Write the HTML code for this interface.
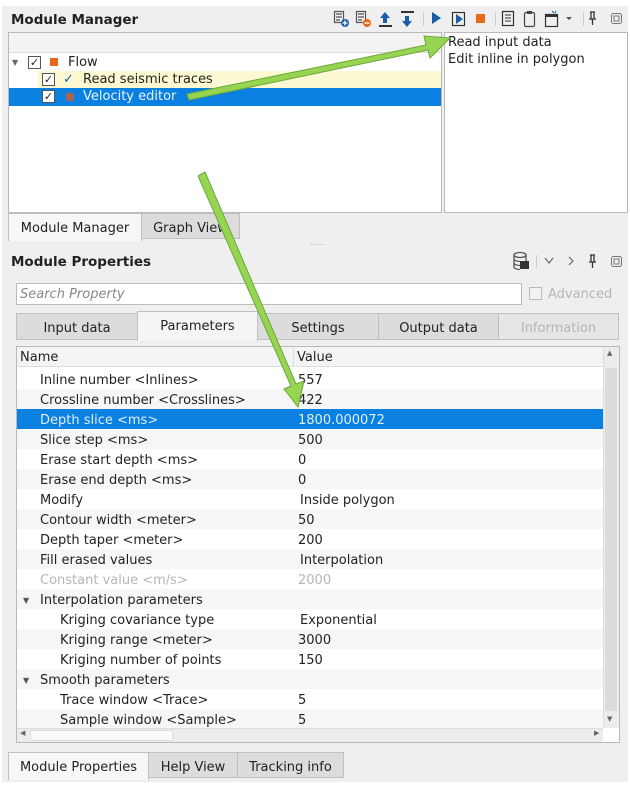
<!DOCTYPE html>
<html><head><meta charset="utf-8">
<style>
*{box-sizing:border-box;margin:0;padding:0}
body{width:630px;height:786px;background:#fff;font-family:"DejaVu Sans","Liberation Sans",sans-serif;font-size:13px;color:#222;position:relative;overflow:hidden}
.a{position:absolute}
.panel{left:2px;top:6px;width:626px;height:776px;background:#efefef}
.bold{font-weight:bold;font-size:13.5px}
.box{background:#fff;border:1px solid #b9b9b9}
.tab{position:absolute;border:1px solid #c0c0c0;background:#dcdcdc;text-align:center;line-height:29px;font-size:13px}
.tab.act{background:#f4f4f4;border-bottom:none}
.cb{position:absolute;width:13px;height:13px;border:1px solid #555;background:#fff;font-size:11px;line-height:11px;text-align:center;font-weight:bold}
.row{position:absolute;left:17px;width:586px;height:20px;line-height:23px}
.row .n{position:absolute;left:23px}
.row .v{position:absolute;left:281px}
.sel{background:#0a80e0;color:#dfeeff}
.alt{background:#f6f6f6}
.dis{color:#b5b5b5}
</style></head><body>
<div class="a panel"></div>
<div class="a bold" style="left:11px;top:12px">Module Manager</div>
<svg class="a" style="left:0;top:0" width="630" height="40">
<g fill="none" stroke="#555" stroke-width="1.2">
<rect x="334.5" y="11.5" width="9" height="11"/><path d="M336 14h6M336 17h6M336 20h4"/>
<rect x="356.5" y="11.5" width="9" height="11"/><path d="M358 14h6M358 17h6M358 20h4"/>
</g>
<circle cx="345" cy="23" r="4" fill="#1a5ea8"/><path d="M342.5 23h5M345 20.5v5" stroke="#fff" stroke-width="1.3"/>
<circle cx="367" cy="23" r="4" fill="#e8691a"/><path d="M364.5 23h5" stroke="#fff" stroke-width="1.3"/>
<path d="M385 12l-5 6h3v5h4v-5h3z" fill="#1a5ea8"/><rect x="379" y="25" width="13" height="2" fill="#333"/>
<rect x="401" y="11" width="13" height="2" fill="#333"/><path d="M407 27l-5-6h3v-5h4v5h3z" fill="#1a5ea8"/>
<rect x="423" y="12" width="1" height="14" fill="#ccc"/>
<path d="M432 12l9 6-9 6z" fill="#1a5ea8"/>
<rect x="452.5" y="12.5" width="12" height="13" fill="none" stroke="#333" stroke-width="1.2"/>
<path d="M456 14l7 5-7 5z" fill="#1a5ea8"/>
<rect x="476" y="14" width="9" height="9" fill="#e8691a"/>
<rect x="495" y="12" width="1" height="14" fill="#ccc"/>
<rect x="502.5" y="11.5" width="11" height="14" fill="none" stroke="#333" stroke-width="1.2"/><path d="M505 15h6M505 18h6M505 21h6" stroke="#333"/>
<rect x="524.5" y="12.5" width="10" height="14" rx="1.5" fill="none" stroke="#444" stroke-width="1.2"/><rect x="527" y="11" width="5" height="3" fill="#444"/>
<rect x="545.5" y="14.5" width="12" height="12" fill="none" stroke="#333" stroke-width="1.2"/><rect x="545" y="14" width="13" height="3" fill="#333"/>
<path d="M552 11l2 2M556 11l-1 2" stroke="#1a5ea8"/>
<path d="M566 17h6l-3 3z" fill="#555"/>
<rect x="583" y="12" width="1" height="14" fill="#ccc"/>
<path d="M590 12h5M591 12v7M594 12v7M589 19h7M592.5 19v6" stroke="#333" stroke-width="1.3" fill="none"/>
<rect x="611.5" y="13.5" width="10" height="10" rx="2" fill="none" stroke="#777"/><rect x="614" y="16" width="5" height="5" fill="none" stroke="#777"/>
</svg>

<div class="a box" style="left:8px;top:32px;width:434px;height:181px"></div>
<div class="a" style="left:9px;top:33px;width:432px;height:20px;background:#f3f3f3;border-bottom:1px solid #ddd"></div>
<div class="a" style="left:12px;top:58px;font-size:8px;color:#666">▼</div>
<div class="cb" style="left:28px;top:56px">✓</div>
<div class="a" style="left:50px;top:58px;width:8px;height:8px;background:#e8691a"></div>
<div class="a" style="left:68px;top:55px">Flow</div>
<div class="a" style="left:38px;top:71px;width:403px;height:17px;background:#fcf9d2"></div>
<div class="cb" style="left:42px;top:73px">✓</div>
<div class="a" style="left:63px;top:72px;color:#1a5ea8;font-weight:bold">✓</div>
<div class="a" style="left:83px;top:72px">Read seismic traces</div>
<div class="a" style="left:9px;top:88px;width:432px;height:18px;background:#0a80e0"></div>
<div class="cb" style="left:42px;top:90px">✓</div>
<div class="a" style="left:66px;top:93px;width:8px;height:8px;background:#a3655a"></div>
<div class="a" style="left:83px;top:89px;color:#e8f2ff">Velocity editor</div>

<div class="a box" style="left:444px;top:32px;width:184px;height:181px"></div>
<div class="a" style="left:448px;top:35px">Read input data</div>
<div class="a" style="left:448px;top:52px">Edit inline in polygon</div>

<div class="tab act" style="left:8px;top:213px;width:134px;height:28px;background:#f7f7f7">Module Manager</div>
<div class="tab" style="left:141px;top:213px;width:99px;height:26px">Graph View</div>
<div class="a" style="left:310px;top:238px;font-size:8px;color:#aaa">......</div>

<div class="a bold" style="left:11px;top:254px">Module Properties</div>
<svg class="a" style="left:500px;top:245px" width="130" height="30">
<ellipse cx="20" cy="10" rx="6" ry="2.5" fill="none" stroke="#555" stroke-width="1.3"/>
<path d="M14 10v12c0 1.5 3 2.5 6 2.5M26 10v6M14 14c0 1.5 3 2.5 6 2.5M14 18c0 1.5 3 2.5 6 2.5" fill="none" stroke="#555" stroke-width="1.3"/>
<rect x="20" y="16" width="9" height="8" fill="#333"/>
<rect x="36" y="10" width="1" height="13" fill="#ccc"/>
<path d="M45 13l4 5 4-5" fill="none" stroke="#666" stroke-width="1.2"/>
<path d="M69 12l4 4-4 4" fill="none" stroke="#666" stroke-width="1.2"/>
<path d="M90 10h5M91 10v7M94 10v7M89 17h7M92.5 17v6" stroke="#333" stroke-width="1.3" fill="none"/>
<rect x="111.5" y="11.5" width="10" height="10" rx="2" fill="none" stroke="#777"/><rect x="114" y="14" width="5" height="5" fill="none" stroke="#777"/>
</svg>

<div class="a box" style="left:16px;top:283px;width:506px;height:22px;border-color:#bbb"></div>
<div class="a" style="left:20px;top:287px;font-style:italic;color:#888">Search Property</div>
<div class="a" style="left:529px;top:287px;width:13px;height:13px;border:1px solid #bbb;background:#f2f2f2"></div>
<div class="a" style="left:548px;top:287px;color:#b5b5b5">Advanced</div>

<div class="tab" style="left:16px;top:313px;width:122px;height:27px">Input data</div>
<div class="tab act" style="left:137px;top:311px;width:121px;height:30px;background:#f5f5f5">Parameters</div>
<div class="tab" style="left:257px;top:313px;width:122px;height:27px">Settings</div>
<div class="tab" style="left:378px;top:313px;width:121px;height:27px">Output data</div>
<div class="tab dis" style="left:498px;top:313px;width:121px;height:27px;background:#e6e6e6">Information</div>

<div class="a box" style="left:16px;top:346px;width:604px;height:397px"></div>
<div class="a" style="left:17px;top:347px;width:586px;height:20px;background:#f4f4f4;border-bottom:1px solid #ddd"></div>
<div class="a" style="left:20px;top:350px">Name</div>
<div class="a" style="left:293px;top:347px;width:1px;height:20px;background:#ddd"></div>
<div class="a" style="left:297px;top:350px">Value</div>
<div class="a" style="left:603px;top:347px;width:16px;height:381px;background:#ececec;border-left:1px solid #ddd"></div>
<div class="a" style="left:605px;top:368px;width:12px;height:343px;background:#dcdcdc"></div>
<div class="a" style="left:607px;top:349px;font-size:7px;color:#666">▲</div>
<div class="a" style="left:607px;top:715px;font-size:7px;color:#666">▼</div>

<div class="row" style="top:369px"><span class="n">Inline number &lt;Inlines&gt;</span><span class="v">557</span></div>
<div class="row alt" style="top:389px"><span class="n">Crossline number &lt;Crosslines&gt;</span><span class="v">422</span></div>
<div class="row sel" style="top:409px"><span class="n">Depth slice &lt;ms&gt;</span><span class="v">1800.000072</span></div>
<div class="row alt" style="top:429px"><span class="n">Slice step &lt;ms&gt;</span><span class="v">500</span></div>
<div class="row" style="top:449px"><span class="n">Erase start depth &lt;ms&gt;</span><span class="v">0</span></div>
<div class="row alt" style="top:469px"><span class="n">Erase end depth &lt;ms&gt;</span><span class="v">0</span></div>
<div class="row" style="top:489px"><span class="n">Modify</span><span class="v" style="left:283px">Inside polygon</span></div>
<div class="row alt" style="top:509px"><span class="n">Contour width &lt;meter&gt;</span><span class="v">50</span></div>
<div class="row" style="top:529px"><span class="n">Depth taper &lt;meter&gt;</span><span class="v">200</span></div>
<div class="row alt" style="top:549px"><span class="n">Fill erased values</span><span class="v" style="left:283px">Interpolation</span></div>
<div class="row dis" style="top:569px"><span class="n">Constant value &lt;m/s&gt;</span><span class="v">2000</span></div>
<div class="row alt" style="top:589px"><span style="position:absolute;left:6px;font-size:8px;color:#555">▼</span><span class="n">Interpolation parameters</span></div>
<div class="row" style="top:609px"><span class="n" style="left:43px">Kriging covariance type</span><span class="v" style="left:283px">Exponential</span></div>
<div class="row alt" style="top:629px"><span class="n" style="left:43px">Kriging range &lt;meter&gt;</span><span class="v">3000</span></div>
<div class="row" style="top:649px"><span class="n" style="left:43px">Kriging number of points</span><span class="v">150</span></div>
<div class="row alt" style="top:669px"><span style="position:absolute;left:6px;font-size:8px;color:#555">▼</span><span class="n">Smooth parameters</span></div>
<div class="row" style="top:689px"><span class="n" style="left:43px">Trace window &lt;Trace&gt;</span><span class="v">5</span></div>
<div class="row alt" style="top:709px"><span class="n" style="left:43px">Sample window &lt;Sample&gt;</span><span class="v">5</span></div>

<div class="a" style="left:17px;top:728px;width:586px;height:14px;background:#ececec;border-top:1px solid #ddd"></div>
<div class="a" style="left:30px;top:730px;width:143px;height:11px;background:#fafafa;border:1px solid #ddd"></div>
<div class="a" style="left:20px;top:729px;font-size:7px;color:#666">◀</div>
<div class="a" style="left:594px;top:729px;font-size:7px;color:#666">▶</div>

<div class="tab act" style="left:8px;top:752px;width:141px;height:28px;background:#f7f7f7">Module Properties</div>
<div class="tab" style="left:148px;top:752px;width:90px;height:26px">Help View</div>
<div class="tab" style="left:237px;top:752px;width:107px;height:26px">Tracking info</div>

<svg class="a" style="left:0;top:0" width="630" height="786">
<g fill="#96d452" stroke="#6aa83a" stroke-width="1">
<polygon points="187,94 426,45 424,36 450,38 430,58 428,50 189,100"/>
<polygon points="198,176 205,172 296,384 304,381 298,407 284,389 291,386"/>
</g>
</svg>
</body></html>
